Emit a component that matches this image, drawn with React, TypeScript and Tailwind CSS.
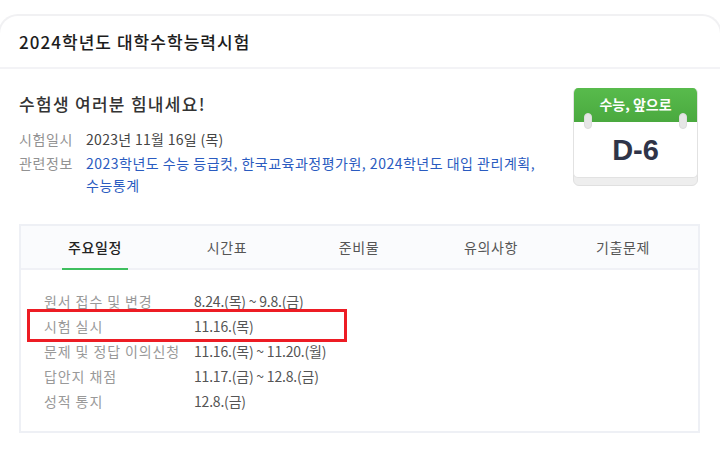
const rows = [
  { label: "원서 접수 및 변경", value: "8.24.(목) ~ 9.8.(금)" },
  { label: "시험 실시", value: "11.16.(목)", marked: true },
  { label: "문제 및 정답 이의신청", value: "11.16.(목) ~ 11.20.(월)" },
  { label: "답안지 채점", value: "11.17.(금) ~ 12.8.(금)" },
  { label: "성적 통지", value: "12.8.(금)" },
];

const tabs = ["주요일정", "시간표", "준비물", "유의사항", "기출문제"];

function Calendar() {
  return (
    <div className="relative w-[125px] h-[98px] shrink-0 mt-[19px]">
      <div className="absolute left-0 right-0 bottom-0 h-[20px] rounded-b-[6px] bg-[#eeeeee] border border-[#e0e0e0]" />
      <div className="absolute left-0 right-0 top-0 h-[90px] rounded-[5px] bg-white border-x border-b border-[#e2e2e2] overflow-hidden">
        <div className="h-[34px] bg-gradient-to-b from-[#58bb4c] to-[#4aa93f] flex items-center justify-center pb-[2px] text-[14px] font-bold text-white">
          수능, 앞으로
        </div>
        <div className="h-[55px] flex items-center justify-center pt-[1px] text-[29px] leading-none font-bold text-[#2f3448] font-['Liberation_Sans',sans-serif]">
          D-6
        </div>
      </div>
      <div className="absolute left-[11px] top-[25px] w-[8px] h-[16px] rounded-full bg-[#e6e6e6] border border-[#dcdcdc]" />
      <div className="absolute right-[11px] top-[25px] w-[8px] h-[16px] rounded-full bg-[#e6e6e6] border border-[#dcdcdc]" />
    </div>
  );
}

export default function App() {
  return (
    <div className="w-[720px] h-[454px] overflow-hidden bg-white pt-[14px] font-['Noto_Sans_CJK_KR','Noto_Sans',sans-serif]">
      <div className="-mx-[2px] h-[460px] rounded-t-[20px] border-2 border-b-0 border-[#f1f1f3]">
        <div className="h-[53px] border-b-2 border-[#f3f3f6] pl-[19px] pt-[13px] text-[17px] leading-[26px] font-medium tracking-[1.05px] text-[#1c1c1c]">
          2024학년도 대학수학능력시험
        </div>

        <div className="flex pl-[19px] pr-[21px]">
          <div className="w-[554px] pt-[23px]">
            <div className="text-[17px] leading-[24px] font-medium tracking-[1.3px] text-[#333]">수험생 여러분 힘내세요!</div>
            <div className="mt-[11px] mb-[1px] flex text-[14px] leading-[24px]">
              <span className="w-[67px] shrink-0 tracking-[0.6px] text-[#929292]">시험일시</span>
              <span className="tracking-[0.3px] text-[#444]">2023년 11월 16일 (목)</span>
            </div>
            <div className="flex text-[14px] leading-[22px]">
              <span className="w-[67px] shrink-0 tracking-[0.6px] text-[#929292]">관련정보</span>
              <span className="text-[#2a5bc0] w-[460px] tracking-[0.5px] break-keep">
                2023학년도 수능 등급컷, 한국교육과정평가원, 2024학년도 대입 관리계획, 수능통계
              </span>
            </div>
          </div>
          <Calendar />
        </div>

        <div className="mt-[28px] ml-[19px] mr-[20px] h-[209px] border-2 border-[#eef0f5]">
          <div className="flex h-[44px] bg-[#fafbfd] border-b-2 border-[#f0f1f6] pl-[8px]">
            {tabs.map((tab, i) => (
              <div
                key={tab}
                className={
                  i === 0
                    ? "relative w-[132px] text-center text-[14px] leading-[42px] font-medium tracking-[0.6px] text-[#222]"
                    : "w-[132px] text-center text-[14px] leading-[42px] tracking-[0.6px] text-[#555]"
                }
              >
                {tab}
                {i === 0 && (
                  <span className="absolute left-[33px] right-[33px] -bottom-[2px] h-[2px] bg-[#3fbf5f]" />
                )}
              </div>
            ))}
          </div>
          <div className="pt-[19px] pl-[23px]">
            {rows.map((row) => (
              <div key={row.label} className="relative flex h-[25px] items-center text-[14px]">
                <span className="w-[150px] shrink-0 text-[#999] tracking-[0.9px] whitespace-nowrap">{row.label}</span>
                <span className="text-[#555] tracking-[-0.2px]">{row.value}</span>
                {row.marked && (
                  <span className="absolute left-[-17px] top-[-5px] w-[320px] h-[33px] border-[3px] border-[#ed1c24]" />
                )}
              </div>
            ))}
          </div>
        </div>
      </div>
    </div>
  );
}
